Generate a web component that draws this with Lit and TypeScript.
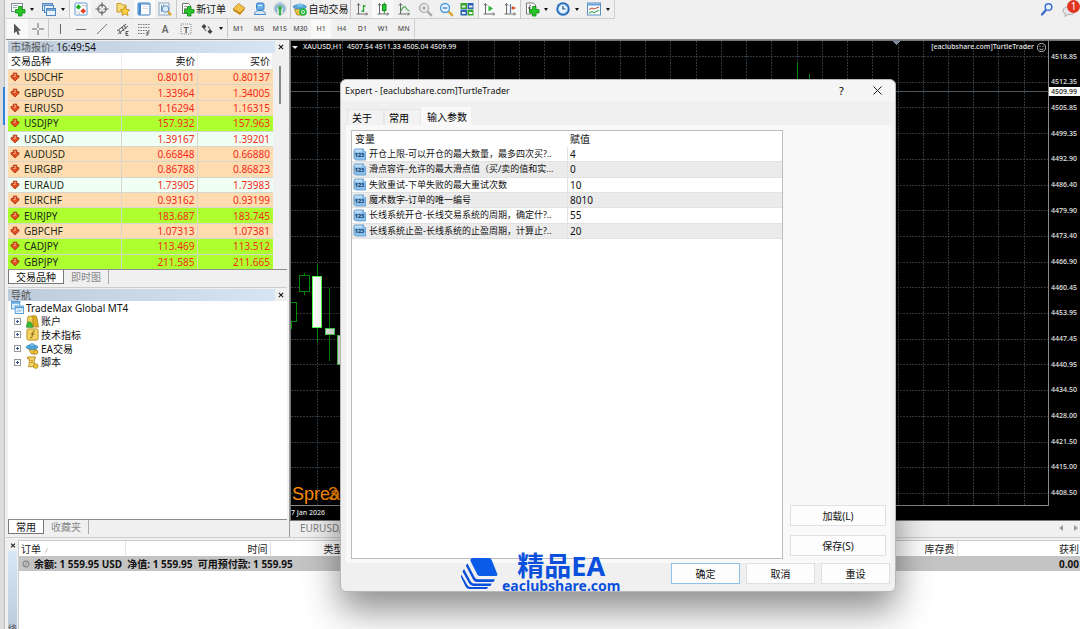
import { LitElement, html, svg, css, nothing } from "lit";
import { customElement, property } from "lit/decorators.js";

const sheet = svg`<path d="M2.5 1.5h6l2 2v8h-8z" fill="#fdfdfd" stroke="#777"/><path d="M4 4.5h3M4 6.500h5M4 8.500h4" stroke="#888" stroke-width=".8"/>`;
const plus = svg`<path d="M7.500 4.500h3.500v3h3v3.500h-3v3h-3.500v-3h-3V7.500h3z" fill="#28c428" stroke="#0d8a12" stroke-width=".8"/>`;
const axes = svg`<path d="M3.500 1.500v10.500M1.500 12h11M2 3.500l1.500-2 1.500 2M11 10.500l1.500 1.500-1.500 1.500" fill="none" stroke="#6b6b6b"/>`;
const lens = svg`<path d="M9 9l4.200 4.200" stroke-width="2.400" stroke="currentColor" stroke-linecap="round"/>`;

const icons: Record<string, unknown> = {
  newChart: svg`<rect x=".5" y="1.500" width="11" height="8" fill="#f8fbf8" stroke="#7d8f9c"/><path d="M2 3.500h5M2 5.500h4" stroke="#9ab"/>${plus}`,
  windows: svg`<rect x=".5" y="1.500" width="10" height="7" fill="#e6f1fb" stroke="#4f88c0"/><path d="M.5 3h10" stroke="#4f88c0"/><rect x="2.500" y="3.500" width="9" height="7" fill="#e6f1fb" stroke="#4f88c0"/><rect x="4.500" y="6.500" width="9" height="7" fill="#e6f1fb" stroke="#4f88c0"/><path d="M4.500 8h9" stroke="#4f88c0" stroke-width="1.500"/>`,
  watch: svg`<rect x="1" y="1" width="12" height="12" rx="1" fill="#fff" stroke="#5b9bd5"/><path d="M4.500 2.200L7.200 5 4.500 7.800 1.800 5z" fill="#1fae2a"/><path d="M8 3.500h1.500M10.500 4h1.500M2.500 10h1M4.500 11h1.500" stroke="#999"/><path d="M9.200 6.200L12 9l-2.800 2.800L6.400 9z" fill="#e2401e"/>`,
  target: svg`<circle cx="7" cy="7" r="4" fill="none" stroke="#777" stroke-width="1.500"/><path d="M7 .5v5M7 8.500v5M.5 7h5M8.500 7h5" stroke="#666" stroke-width="1.200"/>`,
  favorite: svg`<path d="M1 1.500h4l1 1.500h4v7H1z" fill="#f7dd7a" stroke="#c69a2a"/><path d="M9 4.500l1.500 3 3.200.4-2.300 2.200.6 3.300L9 11.800l-3 1.600.6-3.300-2.300-2.200 3.200-.4z" fill="#ffd23f" stroke="#b98512" stroke-width=".8"/>`,
  data: svg`<rect x="1" y="1" width="12" height="12" rx="1" fill="#fff" stroke="#3d7fc4"/><path d="M1 2h12" stroke="#3d7fc4"/><rect x="1.500" y="2" width="2.500" height="10.500" fill="#3d86d0"/><path d="M5.500 4.500h6M5.500 6.500h6" stroke="#dde"/>`,
  tester: svg`<rect x="1" y="1" width="10" height="12" fill="#f1f6fb" stroke="#8aa5bf"/><path d="M3.500 3v7M5.500 2.500v5" stroke="#6c96bf"/><circle cx="7.500" cy="7" r="3.300" fill="#dcecfa" stroke="#5b8fc2"/><path d="M10 9.500l3.200 3.700" stroke="#d9a020" stroke-width="2"/>`,
  order: svg`${sheet}${plus}`,
  diamond: svg`<path d="M1 8.500L6.500 2 13 7l-5 6z" fill="#c98a12"/><path d="M1 7L6.500 1.500 13 6 8 11z" fill="#f3c04a" stroke="#b57d10" stroke-width=".7"/>`,
  account: svg`<path d="M1.500 12.500c0-3 2-4 5.500-4s5.500 1 5.500 4z" fill="#d7e8f8" stroke="#4a86c4"/><rect x="3.500" y="1" width="7.500" height="7" rx="1.500" fill="#6ab2ee" stroke="#3e7dbd"/><path d="M5 3.500h4" stroke="#e8f5ff"/>`,
  signal: svg`<circle cx="7" cy="6.500" r="6" fill="#cfdde6" stroke="#b0c4d0"/><path d="M4 9.500a4 4 0 1 1 6 0" fill="none" stroke="#6a9cc4" stroke-width="1.200"/><path d="M7 6v7.500" stroke="#2faa3a" stroke-width="1.800"/><circle cx="7" cy="6" r="1.900" fill="#2faa3a"/>`,
  auto: svg`<path d="M1.500 7.500L7 5l5.500 2.500-3 5.500H4z" fill="#edc23f" stroke="#aa7e14" stroke-width=".8"/><ellipse cx="6.800" cy="4.800" rx="6.500" ry="2.300" fill="#58a8dc" stroke="#2d78ae" stroke-width=".7"/><path d="M3.500 4.500c0-4.500 6.500-4.500 6.500 0z" fill="#7dc2ec"/><circle cx="10" cy="10" r="3.800" fill="#22b53a"/><rect x="8.600" y="8.600" width="2.800" height="2.800" rx=".8" fill="none" stroke="#fff"/>`,
  bars: svg`${axes}<path d="M8.500 3v7M8.500 4h2M6.500 9h2" stroke="#28a332" stroke-width="1.300"/>`,
  candles: svg`${axes}<path d="M8.300 .5v11" stroke="#168a20"/><rect x="6.500" y="2.500" width="3.500" height="6" fill="#25cb35" stroke="#168a20"/>`,
  line: svg`${axes}<path d="M4 9c2-5 4-5 5-3s2 2.500 3.500 3" fill="none" stroke="#4aa852" stroke-width="1.200"/>`,
  zoomIn: svg`<g color="#aaa">${lens}</g><circle cx="6" cy="6" r="4.500" fill="#eee" stroke="#a5a5a5" stroke-width="1.200"/><path d="M3.800 6h4.400M6 3.800v4.400" stroke="#999"/>`,
  zoomOut: svg`<g color="#d8a52a">${lens}</g><circle cx="6" cy="6" r="4.500" fill="#e3f2fd" stroke="#4d9ade" stroke-width="1.300"/><path d="M3.800 6h4.400" stroke="#2b6fb4" stroke-width="1.200"/>`,
  tiles: svg`<rect x=".5" y="1" width="6.500" height="6" fill="#3aa52e"/><rect x="7.500" y="1" width="6" height="6" fill="#2d62b8"/><rect x=".5" y="7.500" width="6.500" height="6" fill="#2d62b8"/><rect x="7.500" y="7.500" width="6" height="6" fill="#3aa52e"/><path d="M2 4.500h3.500M9 4.500h3.500M2 11h3.500M9 11h3.500" stroke="#e8f3e4" stroke-width="2"/>`,
  scroll: svg`${axes}<path d="M6.500 3.500l4.500 3-4.500 3z" fill="#2db83a"/>`,
  shift: svg`${axes}<path d="M7.500 2v9" stroke="#5577aa" stroke-width="1.200"/><path d="M12.500 6H9M10.500 4.500L9 6l1.500 1.500" fill="none" stroke="#d0501e" stroke-width="1.300"/>`,
  indicator: svg`<path d="M1.500 1h7l2 2v9h-9z" fill="#fdfdfd" stroke="#777"/><path d="M6 3.500c-1.500-.5-1.500.5-1.500 1.500V10M3 6h3" fill="none" stroke="#555"/>${plus}`,
  clock: svg`<circle cx="7" cy="7" r="6.700" fill="#2468b8"/><circle cx="7" cy="7" r="4.700" fill="#e9f4fd" stroke="#7db7ea"/><path d="M7 4v3h2.500" fill="none" stroke="#24507f" stroke-width="1.200"/>`,
  template: svg`<rect x=".5" y="1" width="13" height="12" fill="#f4f9fe" stroke="#5f8fbd"/><path d="M.5 2.500h13" stroke="#6aa4da" stroke-width="2"/><path d="M2 7.500l3-1.500 2 1 5-2" fill="none" stroke="#c0442c"/><path d="M2 11l3-1.500 2 1.200 5-2.500" fill="none" stroke="#2f9c3c"/>`,
  cursor: svg`<path d="M4 1.500v10l2.300-2.200 1.600 3.700 1.800-.8-1.600-3.500h3z" fill="#555"/>`,
  cross: svg`<path d="M7 1v5M7 8v5M1 7h5M8 7h5" stroke="#666"/>`,
  vline: svg`<path d="M7.500 2v10" stroke="#666"/>`,
  hline: svg`<path d="M2 7.500h10" stroke="#666"/>`,
  trend: svg`<path d="M2 12L12 2" stroke="#777"/>`,
  channel: svg`<path d="M1 9l9-7M2 12l10-8M3 8l2 4M6 5l2 4M8 3l2 4" stroke="#555"/><path d="M12.500 9.500H10v4h2.500M10 11.500h2" fill="none" stroke="#555"/>`,
  fibo: svg`<path d="M1 2.500h12M1 5.500h12M1 8.500h12M1 11.500h7" stroke="#777" stroke-dasharray="1.500 1"/><path d="M12.500 10h-2.500v4M10 12h2" fill="none" stroke="#555"/>`,
  letterA: svg`<text x="7" y="11" text-anchor="middle" font-size="10" font-weight="600" fill="#6a6a6a">A</text>`,
  letterT: svg`<rect x="2" y="2" width="10" height="10" fill="none" stroke="#888" stroke-dasharray="1 1"/><text x="7" y="10.500" text-anchor="middle" font-size="9" font-weight="600" fill="#555">T</text>`,
  arrows: svg`<path d="M4 2l2.500 2.500L4 7 1.500 4.500zM10 7l2.500 2.500L10 12 7.500 9.500z" fill="#444"/><path d="M4 6l2 3M8 4.500l2 2.500" stroke="#666" stroke-width="1.200"/>`,
  quote: svg`<path d="M4 2.500h6v3h3L7 13 1 5.500h3z" fill="#8c3b20" opacity=".35"/><path d="M4.500 1.500h5v3.500h3v2.500L7 12.500 1.500 7.500V5h3z" fill="#e2501f" stroke="#9b2c10"/><path d="M5.500 3h2v3.500h-3" fill="none" stroke="#ffb08a" stroke-width="1.200"/>`,
  terminal: svg`<rect x=".5" y=".5" width="9" height="8" fill="#dceefb" stroke="#4f9bd8"/><path d="M.5 2h9" stroke="#4f9bd8" stroke-width="1.500"/><rect x="4.500" y="5.500" width="9" height="8" fill="#eaf5fd" stroke="#4f9bd8"/><path d="M4.500 7h9" stroke="#4f9bd8" stroke-width="1.500"/><path d="M6 12l2-2.500 1.500 2 2-2.500" fill="none" stroke="#5b9fd6" stroke-width=".9"/>`,
  people: svg`<path d="M5 13V4q0-3.500 3.500-3.500T12 4l1.500 9z" fill="#e0ad26" stroke="#9a720e" stroke-width=".7"/><path d="M1.500 12V4q0-3 3-3t3 3v8z" fill="#f2cf58" stroke="#9a720e" stroke-width=".7"/><path d="M.5 13.300c0-8 6.500-8 6.500 0z" fill="#3cb83a" stroke="#1d8420" stroke-width=".7"/>`,
  func: svg`<rect x="1" y="1" width="12" height="12" rx="1.500" fill="#f3d261" stroke="#b78d20"/><path d="M9.500 3.500c-2-.8-2 .8-2.500 3.500s-.8 4-2.500 3.500M5 6.500h4" fill="none" stroke="#775a10"/>`,
  advisor: svg`<path d="M3 8l5-1 4 2-2 4H6z" fill="#ecc245" stroke="#a67c16" stroke-width=".8"/><ellipse cx="6.500" cy="5.500" rx="6.200" ry="2.500" fill="#4fa6dc" stroke="#2e7db3" stroke-width=".7"/><path d="M3.500 5c0-4.500 6-4.500 6 0z" fill="#76bfea" stroke="#2e7db3" stroke-width=".6"/><circle cx="10.500" cy="11" r="2.300" fill="#f2c83a" stroke="#a67c16" stroke-width=".8"/>`,
  script: svg`<path d="M1.500 1H10v2H9v6l2 2.500H2.500L3.500 9V3h-2z" fill="#f2d568" stroke="#b78d20"/><path d="M5 5h2.500M5 7h2.500" stroke="#b78d20"/><circle cx="10.500" cy="10.800" r="2.500" fill="#f2c83a" stroke="#a67c16" stroke-width=".8"/>`,
  number: svg`<path d="M2 1h9.500l-.5 2 2.500 1v9H3.500L1 11.500V3z" fill="#8cc0ea" stroke="#5b95c9" stroke-width=".8"/><path d="M2 2h8l-.5 2H2z" fill="#c2e0f7"/><text x="7" y="10" text-anchor="middle" font-size="6" font-weight="800" fill="#123f70">123</text>`,
  search: svg`<path d="M5.500 8.500L2 12.500" stroke="#3767c8" stroke-width="2.200" stroke-linecap="round"/><circle cx="8.500" cy="5" r="3.300" fill="#eef4fd" stroke="#3c72d8" stroke-width="1.500"/>`,
  chat: svg`<path d="M1 9c0-6 12-6 12 0 0 3-4 4-7 3.500L3 14.500l.3-3C1.500 11 1 10 1 9z" fill="#e6e6e6" stroke="#aaa"/>`,
  none: svg`<circle cx="7" cy="7" r="4" fill="none" stroke="#888" stroke-width="1.500"/><path d="M4.500 9.500l5-5" stroke="#888" stroke-width="1.300"/>`,
  close: svg`<path d="M4.500 4.500l5 5M9.500 4.500l-5 5" stroke="#222" stroke-width="1.400"/>`,
};

@customElement("mt-icon")
export class MtIcon extends LitElement {
  @property() name = "";
  static styles = css`
    :host { display: inline-flex; flex: none; width: 14px; height: 14px; }
    svg { width: 100%; height: 100%; overflow: visible; font-family: "Noto Sans", sans-serif; }
  `;
  render() {
    return html`<svg viewBox="0 0 14 14" aria-hidden="true">${icons[this.name]}</svg>`;
  }
}

interface Tool { icon?: string; label?: string; text?: string; caret?: boolean; on?: boolean }
const rowOne: [string, Tool[]][] = [
  ["g-new", [{ icon: "newChart", label: "新图表", caret: true }, { icon: "windows", label: "配置文件", caret: true }]],
  ["g-five", [{ icon: "watch", label: "市场报价", on: true }, { icon: "target", label: "数据窗口" }, { icon: "favorite", label: "导航" }, { icon: "data", label: "终端", on: true }, { icon: "tester", label: "测试" }]],
  ["g-order", [{ icon: "order", text: "新订单" }, { icon: "diamond", label: "编辑器" }, { icon: "account", label: "社区" }, { icon: "signal", label: "信号" }]],
  ["g-auto", [{ icon: "auto", text: "自动交易" }]],
  ["g-six", [{ icon: "bars", label: "柱状图" }, { icon: "candles", label: "蜡烛图", on: true }, { icon: "line", label: "折线图" }, { icon: "zoomIn", label: "放大" }, { icon: "zoomOut", label: "缩小" }, { icon: "tiles", label: "平铺" }]],
  ["g-two", [{ icon: "scroll", label: "自动滚动", on: true }, { icon: "shift", label: "图表平移", on: true }]],
  ["g-three", [{ icon: "indicator", label: "指标", caret: true }, { icon: "clock", label: "周期", caret: true }, { icon: "template", label: "模板", caret: true }]],
];
const rowTwo: [string, Tool[]][] = [
  ["g-two", [{ icon: "cursor", label: "光标", on: true }, { icon: "cross", label: "十字线" }]],
  ["g-draw", [{ icon: "vline", label: "垂直线" }, { icon: "hline", label: "水平线" }, { icon: "trend", label: "趋势线" }, { icon: "channel", label: "通道" }, { icon: "fibo", label: "斐波那契" }, { icon: "letterA", label: "文字" }, { icon: "letterT", label: "标签" }, { icon: "arrows", label: "箭头", caret: true }]],
  ["g-period", ["M1", "M5", "M15", "M30", "H1", "H4", "D1", "W1", "MN"].map((t) => ({ text: t, on: t === "H1" }))],
];

@customElement("mt-toolbar")
export class MtToolbar extends LitElement {
  static styles = css`
    :host { display: flex; flex-direction: column; position: relative; background: #f0f0f0; border-bottom: 1px solid #8a8a8a; }
    .row { display: flex; height: 19px; box-sizing: border-box; align-self: flex-start; border: solid #cfcfcf; border-width: 0 1px 1px 0; }
    .row.two { height: 20px; border-bottom-color: #f0f0f0; }
    .group { display: flex; box-sizing: border-box; border-left: 1px solid #c8c8c8; }
    .group:first-child { border-left-color: #f0f0f0; }
    button { flex: 1 1 auto; display: flex; align-items: center; justify-content: center; gap: 2px; padding: 0; border: 0; background: none; color: #111; font: 10px/12px "Noto Sans", "Noto Sans CJK SC", sans-serif; white-space: nowrap; }
    button.on { background: #f9f9f9; }
    .caret { width: 0; height: 0; margin-left: 3px; border: solid transparent; border-width: 3px 2px 0; border-top-color: #111; }
    .g-new { width: 63px; } .g-five { width: 107px; } .g-order { width: 114px; } .g-auto { width: 60px; }
    .g-six { width: 128px; } .g-two { width: 42px; } .g-three { width: 94px; } .g-draw { width: 179px; } .g-period { width: 187px; }
    .g-period button { flex: 1 1 0; font-size: 7px; font-weight: 500; color: #555; }
    .side { position: absolute; right: 0; top: 0; display: flex; }
    .side button { position: relative; width: 22px; height: 18px; }
    .badge { position: absolute; right: 0; top: 0; width: 13px; height: 13px; border-radius: 7px; background: #e03420; color: #fff; font-size: 10px; line-height: 13px; }
  `;
  private row(groups: [string, Tool[]][], cls: string) {
    return html`<div class="row ${cls}">${groups.map(([g, tools]) => html`<div class="group ${g}">${tools.map((t) => html`
      <button class=${t.on ? "on" : ""} aria-label=${t.label ?? t.text ?? ""}>${t.icon ? html`<mt-icon name=${t.icon}></mt-icon>` : nothing}${t.text ?? nothing}${t.caret ? html`<span class="caret"></span>` : nothing}</button>`)}</div>`)}</div>`;
  }
  render() {
    return html`${this.row(rowOne, "one")}${this.row(rowTwo, "two")}
      <div class="side"><button aria-label="搜索"><mt-icon name="search"></mt-icon></button>
      <button aria-label="消息"><mt-icon name="chat"></mt-icon><span class="badge">1</span></button></div>`;
  }
}

const quotes: [string, string, string, string][] = [
  ["USDCHF", "0.80101", "0.80137", "tan"], ["GBPUSD", "1.33964", "1.34005", "tan"], ["EURUSD", "1.16294", "1.16315", "tan"],
  ["USDJPY", "157.932", "157.963", "lime"], ["USDCAD", "1.39167", "1.39201", "mint"], ["AUDUSD", "0.66848", "0.66880", "tan"],
  ["EURGBP", "0.86788", "0.86823", "tan"], ["EURAUD", "1.73905", "1.73983", "mint"], ["EURCHF", "0.93162", "0.93199", "tan"],
  ["EURJPY", "183.687", "183.745", "lime"], ["GBPCHF", "1.07313", "1.07381", "tan"], ["CADJPY", "113.469", "113.512", "lime"],
  ["GBPJPY", "211.585", "211.665", "lime"],
];

@customElement("mt-dock")
export class MtDock extends LitElement {
  static styles = css`
    :host { display: flex; flex-direction: column; width: 284px; flex: none; box-sizing: border-box; padding: 1px 2px 0; background: #f0f0f0; border-right: 1px solid #999; font: 10px/12px "Noto Sans", "Noto Sans CJK SC", sans-serif; color: #111; }
    section { display: flex; flex-direction: column; border-bottom: 1px solid #ccc; }
    section + section { border-bottom: 0; padding-top: 1px; flex: 1; }
    header { display: flex; align-items: center; height: 12px; }
    h2 { flex: 1; margin: 0; padding-left: 3px; font: inherit; line-height: 12px; color: #555; background: linear-gradient(90deg, #becbda, #d6e4f3); }
    h2 b { font-weight: 400; color: #111; }
    header button { display: flex; width: 12px; padding: 0; border: 0; background: none; }
    header mt-icon { width: 12px; height: 12px; }
    .body { display: flex; }
    table { flex: 1; height: 216px; border-spacing: 0; table-layout: fixed; background: #fff; }
    th { height: 16px; font-weight: 400; text-align: right; padding: 0 2px; border-right: 1px solid #eee; }
    th:first-child { text-align: left; width: 114px; box-sizing: border-box; padding-left: 3px; }
    td { padding: 0 3px 0 2px; text-align: right; color: #f22a1c; border: solid #d6d6ce; border-width: 1px 1px 0 0; }
    td:last-child { border-right: 0; }
    td:first-child { text-align: left; color: #1d2a18; }
    .sym { display: flex; align-items: center; gap: 4px; line-height: 12px; }
    .sym mt-icon { width: 10px; height: 10px; }
    .tan { background: #ffdcb0; } .lime { background: #adff2f; } .mint { background: #f0fff3; }
    .scroll { width: 14px; display: flex; justify-content: center; padding-top: 13px; box-sizing: border-box; }
    .thumb { width: 2px; height: 38px; background: #888; }
    nav { display: flex; height: 17px; border-top: 1px solid #8d8d8d; }
    nav button { height: 14px; padding: 0 7px; border: 0; background: none; font: inherit; color: #888; border-right: 1px solid #aaa; }
    nav button.on { background: #fff; color: #111; border: 1px solid #777; border-top: 0; }
    .tree { flex: 1; background: #fff; }
    ul { display: grid; grid-template-rows: repeat(5, 1fr); height: 68px; margin: 0; padding: 0 3px; list-style: none; }
    li { display: flex; align-items: center; gap: 2px; }
    li mt-icon { width: 13px; height: 13px; }
    li.leaf { padding-left: 3px; }
    .box { width: 7px; height: 7px; box-sizing: border-box; border: 1px solid #999; margin-right: 3px; background: linear-gradient(#35508c, #35508c) center / 3px 1px no-repeat, linear-gradient(#35508c, #35508c) center / 1px 3px no-repeat; }
  `;
  render() {
    return html`
      <section>
        <header><h2>市场报价: <b>16:49:54</b></h2><button aria-label="关闭"><mt-icon name="close"></mt-icon></button></header>
        <div class="body">
          <table><thead><tr><th>交易品种</th><th>卖价</th><th>买价</th></tr></thead>
            <tbody>${quotes.map(([s, bid, ask, tone]) => html`<tr class=${tone}><td><span class="sym"><mt-icon name="quote"></mt-icon>${s}</span></td><td>${bid}</td><td>${ask}</td></tr>`)}</tbody></table>
          <div class="scroll"><div class="thumb"></div></div>
        </div>
        <nav><button class="on">交易品种</button><button>即时图</button></nav>
      </section>
      <section>
        <header><h2>导航</h2><button aria-label="关闭"><mt-icon name="close"></mt-icon></button></header>
        <div class="tree"><ul>
          <li><mt-icon name="terminal"></mt-icon>TradeMax Global MT4</li>
          ${[["people", "账户"], ["func", "技术指标"], ["advisor", "EA交易"], ["script", "脚本"]].map(([i, t]) => html`<li class="leaf"><span class="box"></span><mt-icon name=${i}></mt-icon>${t}</li>`)}
        </ul></div>
        <nav><button class="on">常用</button><button>收藏夹</button></nav>
      </section>`;
  }
}

const prices = ["4518.85", "4512.35", "4505.85", "4499.35", "4492.90", "4486.40", "4479.90", "4473.40", "4466.90", "4460.45", "4453.95", "4447.45", "4440.95", "4434.50", "4428.00", "4421.50", "4415.00", "4408.50"];
const columns = Array.from({ length: 120 }, (_, i) => Math.round(26 + i * 25.24));
const levels = prices.map((_, i) => Math.round(15 + i * 25.7));

@customElement("mt-chart")
export class MtChart extends LitElement {
  static styles = css`
    :host { display: flex; flex-direction: column; flex: 1; min-width: 0; font: 7px/10px "Noto Sans", sans-serif; font-weight: 500; }
    .pane { position: relative; flex: 1; display: grid; grid-template: 1fr 14px / 1fr 31px; background: #000; color: #e8e8e8; border: solid #777; border-width: 1px 0 1px 1px; }
    .plot { position: relative; overflow: hidden; border: solid #8a8a8a; border-width: 0 1px 1px 0; }
    .plot svg { position: absolute; inset: 0; width: 100%; height: 100%; }
    .head { position: absolute; left: 1px; right: 2px; top: 0; display: flex; align-items: center; height: 12px; }
    .head span { margin-right: 5px; }
    .tri { border: solid transparent; border-width: 3px 3px 0; border-top-color: #eee; }
    .head .ea { margin: 0 3px 0 auto; }
    .head svg { position: static; width: 9px; height: 9px; }
    .axis { position: relative; display: grid; grid-template-rows: repeat(18, 1fr); align-items: center; padding: 3px 0 0 2px; }
    .now { position: absolute; left: 0; right: 0; top: 46px; background: #fff; color: #111; padding-left: 2px; line-height: 9px; }
    .spread { position: absolute; left: 1px; bottom: 0; font: 18px/22px "Liberation Sans", sans-serif; color: #ff8c00; }
    .spread i { position: absolute; left: 36px; font-style: normal; }
    .date { padding: 2px 0 0; }
    .tabs { display: flex; justify-content: space-between; align-items: center; height: 16px; box-sizing: border-box; background: #f0f0f0; padding: 0 2px 2px 10px; }
    .tabs button { padding: 0; border: 0; background: none; font: 10px/14px "Noto Sans", sans-serif; color: #808080; }
    .arrows { display: flex; gap: 11px; }
    .arrows i { border: solid transparent; border-width: 3px 4px 3px 0; border-right-color: #999; }
    .arrows i + i { border-width: 3px 0 3px 4px; border-left-color: #999; }
  `;
  render() {
    return html`<div class="pane">
      <div class="plot">
        <svg shape-rendering="crispEdges">
          <g stroke="#303940" stroke-dasharray="2 1">
            ${columns.map((x) => svg`<line x1=${x + 0.5} x2=${x + 0.5} y1="0" y2="100%"/>`)}
            ${levels.map((y) => svg`<line y1=${y + 0.5} y2=${y + 0.5} x1="0" x2="100%"/>`)}
          </g>
          <line x1="0" x2="100%" y1="50.500" y2="50.500" stroke="#4d565e"/>
          <g fill="#000" stroke="#008a00">
            <path d="M0 261.500h5.500v19H0M.5 280v8M13.500 232v22M26.500 223v78M38.500 247v73M506.500 21v20M518.500 33v8"/>
            <rect x="8.500" y="234.500" width="10" height="16"/>
            <rect x="21.500" y="235.500" width="9" height="51" fill="#fff" stroke="#5f5"/>
            <rect x="34.500" y="287.500" width="9" height="6" fill="#f2f2f2" stroke="#5d5"/>
            <rect x="46.500" y="294.500" width="9" height="29" fill="#fff" stroke="#5d5"/>
          </g>
          <path d="M602 0h7l-3.500 4z" fill="#7b8ba0"/>
        </svg>
        <div class="head"><span class="tri"></span><span>XAUUSD,H1</span><span>4507.54 4511.33 4505.04 4509.99</span><span class="ea">[eaclubshare.com]TurtleTrader</span>
          <svg viewBox="0 0 10 10" fill="none" stroke="#ddd" stroke-width=".9"><circle cx="5" cy="5" r="4.500"/><path d="M3.300 3v1.500M6.700 3v1.500M2.800 6.500q2.200 2 4.400 0"/></svg></div>
        <div class="spread">Spread<i>3</i></div>
      </div>
      <div class="axis">${prices.map((p) => html`<span>${p}</span>`)}<span class="now">4509.99</span></div>
      <div class="date">7 Jan 2026</div>
    </div>
    <div class="tabs"><button>EURUSD,H1</button><span class="arrows"><i></i><i></i></span></div>`;
  }
}

@customElement("mt-orders")
export class MtOrders extends LitElement {
  static styles = css`
    :host { display: flex; flex: 1; min-height: 0; overflow: hidden; padding: 2px 0 0 2px; background: #f0f0f0; border-top: 1px solid #d0d0d0; font: 10px/12px "Noto Sans", "Noto Sans CJK SC", sans-serif; color: #222; }
    .strip { display: flex; flex-direction: column; width: 9px; }
    .strip button { display: flex; justify-content: center; padding: 0; border: 0; background: none; }
    .strip mt-icon { width: 12px; height: 11px; }
    .name { flex: 1; display: flex; justify-content: flex-start; overflow: hidden; background: linear-gradient(#d8e6f5, #bccada); font-size: 9px; line-height: 9px; writing-mode: vertical-rl; color: #555; padding-top: 73px; box-sizing: border-box; }
    .list { flex: 1; margin-left: 1px; background: #fff; border: solid #ccc; border-width: 1px 0 0 1px; }
    table { width: 100%; border-collapse: collapse; table-layout: fixed; }
    th, td { box-sizing: border-box; height: 15px; padding: 0 2px; font-weight: 400; text-align: right; border-right: 1px solid #e4e4e4; white-space: nowrap; }
    th:last-child, td { border-right: 0; padding-right: 1px; }
    th:first-child, td:first-child { text-align: left; }
    th svg { width: 3px; height: 5px; margin-left: 4px; }
    .c1 { width: 106px; } .c2 { width: 145px; } .c3 { width: 76px; } .c5 { width: 123px; }
    td { background: #c4c4c4; font-weight: 700; color: #111; }
    .sum { display: flex; align-items: center; gap: 3px; white-space: pre; }
    .sum mt-icon { width: 10px; height: 10px; }
  `;
  render() {
    return html`<div class="strip"><button aria-label="关闭"><mt-icon name="close"></mt-icon></button><span class="name">终端</span></div>
      <div class="list"><table>
        <thead><tr><th class="c1">订单<svg viewBox="0 0 3 5" aria-hidden="true"><path d="M.5 4.500l2-4" stroke="#aaa" stroke-width=".8"/></svg></th><th class="c2">时间</th><th class="c3">类型</th><th>库存费</th><th class="c5">获利</th></tr></thead>
        <tbody><tr><td colspan="4"><span class="sum"><mt-icon name="none"></mt-icon>余额: 1 559.95 USD  净值: 1 559.95  可用预付款: 1 559.95</span></td><td>0.00</td></tr></tbody>
      </table></div>`;
  }
}

const inputs: [string, string][] = [
  ["开仓上限-可以开仓的最大数量，最多四次买?..", "4"],
  ["滑点容许-允许的最大滑点值（买/卖的值和实...", "0"],
  ["失败重试-下单失败的最大重试次数", "10"],
  ["魔术数字-订单的唯一编号", "8010"],
  ["长线系统开仓-长线交易系统的周期，确定什?..", "55"],
  ["长线系统止盈-长线系统的止盈周期，计算止?..", "20"],
];

@customElement("mt-dialog")
export class MtDialog extends LitElement {
  static styles = css`
    :host { display: flex; flex-direction: column; box-sizing: border-box; width: 556px; border: 1px solid #b8b8b8; border-radius: 6px; background: #f0f0f0; box-shadow: 0 18px 36px rgba(0, 0, 0, .45); font: 10px/12px "Noto Sans", "Noto Sans CJK SC", sans-serif; color: #111; }
    header { display: flex; align-items: center; height: 21px; padding: 0 10px 0 4px; background: #f5f5f5; border-radius: 6px 6px 0 0; }
    h1 { flex: 1; margin: 0; font: inherit; font-size: 9px; }
    header button { display: flex; justify-content: center; width: 15px; margin-left: 21px; padding: 0; border: 0; background: none; font: inherit; font-size: 11px; }
    header svg { width: 9px; height: 9px; }
    .tabs { display: flex; align-items: flex-end; height: 18px; margin-top: 6px; padding-left: 6px; }
    .tabs button { width: 37px; height: 16px; padding: 0 0 0 4px; text-align: left; border: 1px solid #e6e6e6; border-bottom: 0; background: #f2f2f2; font: inherit; }
    .tabs button.on { width: 50px; height: 18px; padding-left: 5px; background: #f9f9f9; border-color: #f9f9f9; }
    .panel { display: flex; gap: 7px; margin: 0 4px 0 5px; padding: 5px 5px 4px; background: #f9f9f9; }
    .list { flex: 1; min-height: 427px; border: 1px solid #bdbdbd; background: #fff; }
    table { width: 100%; height: 108px; border-spacing: 0; table-layout: fixed; }
    th { box-sizing: border-box; height: 16px; font-weight: 400; text-align: left; padding: 0 2px; }
    th:first-child { width: 216px; padding-left: 3px; }
    td { padding: 0 2px; border: solid #e2e2e2; border-width: 0 1px 1px 0; }
    td:first-child { padding-left: 1px; }
    td:last-child { border-right: 0; }
    tr:nth-child(even) td { background: #ebebeb; }
    .var { display: flex; align-items: center; gap: 3px; font-size: 9px; white-space: nowrap; overflow: hidden; }
    .var mt-icon { width: 13px; height: 13px; }
    .side { display: flex; flex-direction: column; justify-content: flex-end; gap: 9px; width: 96px; padding-bottom: 3px; }
    .btn { height: 21px; padding: 0; border: 1px solid #e0e0e0; background: #fdfdfd; font: inherit; color: #111; }
    footer { display: flex; justify-content: flex-end; gap: 6px; padding: 0 5px 7px; }
    footer .btn { width: 69px; }
    .btn.main { border-color: #8fc1e6; }
  `;
  render() {
    return html`<header><h1>Expert - [eaclubshare.com]TurtleTrader</h1><button aria-label="帮助">?</button><button aria-label="关闭"><svg viewBox="0 0 9 9"><path d="M.5.5l8 8M8.500.5l-8 8" stroke="#222"/></svg></button></header>
      <div class="tabs"><button>关于</button><button>常用</button><button class="on">输入参数</button></div>
      <div class="panel">
        <div class="list"><table><thead><tr><th>变量</th><th>赋值</th></tr></thead>
          <tbody>${inputs.map(([k, v]) => html`<tr><td><span class="var"><mt-icon name="number"></mt-icon>${k}</span></td><td>${v}</td></tr>`)}</tbody></table></div>
        <div class="side"><button class="btn">加载(L)</button><button class="btn">保存(S)</button></div>
      </div>
      <footer><button class="btn main">确定</button><button class="btn">取消</button><button class="btn">重设</button></footer>`;
  }
}

@customElement("app-root")
export class AppRoot extends LitElement {
  static styles = css`
    :host { display: flex; position: relative; height: 100vh; overflow: hidden; background: #f0f0f0; }
    .rail { position: relative; width: 4px; flex: none; background: #dcdcdc; border-right: 1px solid #bbb; }
    .mark { position: absolute; left: 3px; top: 87px; width: 2px; height: 38px; background: #2f86d8; }
    .app { flex: 1; min-width: 0; display: flex; flex-direction: column; padding-left: 1px; }
    .work { display: flex; height: 497px; flex: none; }
    mt-dialog { position: absolute; left: 340px; top: 79px; }
    .brand { position: absolute; left: 461px; top: 553px; display: flex; align-items: center; gap: 4px; color: #0a50dc; font-family: "Noto Sans", "Noto Sans CJK SC", sans-serif; font-weight: 700; text-align: center; }
    .brand svg { width: 37px; height: 31px; }
    .big { font-size: 27px; line-height: 26px; }
    .small { font-size: 14px; line-height: 14px; }
  `;
  render() {
    return html`<div class="rail"><div class="mark"></div></div>
      <div class="app">
        <mt-toolbar></mt-toolbar>
        <div class="work"><mt-dock></mt-dock><mt-chart></mt-chart></div>
        <mt-orders></mt-orders>
      </div>
      <mt-dialog></mt-dialog>
      <div class="brand">
        <svg viewBox="0 0 37 31" aria-hidden="true"><path d="M12 0h16q2 0 2.700 2l5.600 14q.7 2-1.300 2H19q-2 0-2.700-1.500L9.500 3Q9 0 12 0z" fill="#0a5be8"/><path d="M6.500 5.500l7 13.500q1 2.300 3.500 2.300h17L32.500 24H16q-2.500 0-3.800-2.200L4.800 7.500zM3 11l6.500 12q1.300 2.500 3.800 2.500h17.500L29.500 28H12.500q-3 0-4.300-2.400L1.500 13.500zM.3 16.500l6 10.500q1.200 2 3.400 2h17.500l-1.500 2H8.500q-2.500 0-3.800-2.300L0 19z" fill="#0a50dc"/></svg>
        <div><div class="big">精品EA</div><div class="small">eaclubshare.com</div></div>
      </div>`;
  }
}
